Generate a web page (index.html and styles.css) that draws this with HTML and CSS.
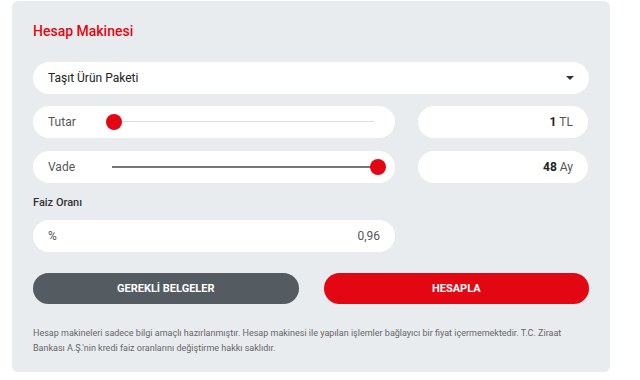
FILE: index.html
```html
<!doctype html>
<html>
    <head>
        <link rel="stylesheet" href="styles.css">
    </head>
    <body>
        <div class="calc">
            <h2 class="title">Hesap Makinesi</h2>
            <div class="select">
                <span>Taşıt Ürün Paketi</span>
                <span class="caret"></span>
            </div>
            <div class="row">
                <div class="pill">
                    <span class="lbl">Tutar</span>
                    <div class="range">
                        <div class="track"></div>
                        <div class="thumb start"></div>
                    </div>
                </div>
                <div class="pill value"><b>1</b>&nbsp;TL</div>
            </div>
            <div class="row">
                <div class="pill">
                    <span class="lbl">Vade</span>
                    <div class="range">
                        <div class="track dark"></div>
                        <div class="thumb end"></div>
                    </div>
                </div>
                <div class="pill value"><b>48</b>&nbsp;Ay</div>
            </div>
            <div class="faiz">Faiz Oranı</div>
            <div class="row">
                <div class="pill rate">
                    <span class="lbl">%</span>
                    <span>0,96</span>
                </div>
            </div>
            <div class="buttons">
                <button class="btn grey">GEREKLİ BELGELER</button>
                <button class="btn red">HESAPLA</button>
            </div>
            <p class="note">Hesap makineleri sadece bilgi amaçlı hazırlanmıştır. Hesap makinesi ile yapılan işlemler bağlayıcı bir fiyat içermemektedir. T.C. Ziraat Bankası A.Ş.'nin kredi faiz oranlarını değiştirme hakkı saklıdır.</p>
        </div>
    </body>
</html>
```
FILE: styles.css
```css
*{
    margin: 0;
    padding: 0;
    box-sizing: border-box;
}
body{
    background: #fff;
    font-family: Roboto, "Liberation Sans", sans-serif;
    color: #333;
}
.calc{
    margin: 1px 0 0 12px;
    width: 598px;
    height: 371px;
    background: #e9ecef;
    border-radius: 6px;
    padding: 22px 21px 0;
}
.title{
    color: #e30613;
    font-size: 14px;
    font-weight: 500;
    height: 39px;
}
.select{
    height: 32px;
    background: #fff;
    border-radius: 16px;
    display: flex;
    align-items: center;
    justify-content: space-between;
    padding: 0 15px;
    font-size: 12px;
    color: #222;
    margin-bottom: 12px;
}
.caret{
    width: 0;
    height: 0;
    border-left: 4px solid transparent;
    border-right: 4px solid transparent;
    border-top: 4px solid #333;
}
.row{
    display: grid;
    grid-template-columns: 362px 170px;
    gap: 23px;
    margin-bottom: 13px;
}
.pill{
    height: 32px;
    background: #fff;
    border-radius: 16px;
    display: flex;
    align-items: center;
    padding: 0 15px;
    font-size: 12px;
    color: #555;
}
.lbl{
    width: 64px;
}
.range{
    position: relative;
    flex: 1;
    height: 16px;
    margin-right: 2px;
}
.track{
    position: absolute;
    left: 0;
    right: 4px;
    top: 7px;
    height: 1px;
    background: #ddd;
}
.track.dark{
    height: 2px;
    background: #777;
}
.thumb{
    position: absolute;
    top: 0;
    width: 16px;
    height: 16px;
    border-radius: 50%;
    background: #e30613;
}
.thumb.start{
    left: -6px;
}
.thumb.end{
    right: -8px;
}
.value{
    justify-content: flex-end;
    color: #555;
}
.value b{
    color: #222;
    font-weight: 700;
}
.rate{
    justify-content: space-between;
}
.faiz{
    font-size: 11px;
    font-weight: 500;
    color: #333;
    margin: 5px 0 11px;
}
.buttons{
    display: grid;
    grid-template-columns: 1fr 1fr;
    gap: 25px;
    margin-top: 21px;
}
.btn{
    height: 31px;
    border: none;
    border-radius: 16px;
    color: #fff;
    font-family: Roboto, "Liberation Sans", sans-serif;
    font-size: 11px;
    font-weight: 700;
}
.grey{
    background: #545c61;
}
.red{
    background: #e30613;
}
.note{
    font-size: 9px;
    line-height: 15px;
    color: #666;
    margin-top: 22px;
}
```
